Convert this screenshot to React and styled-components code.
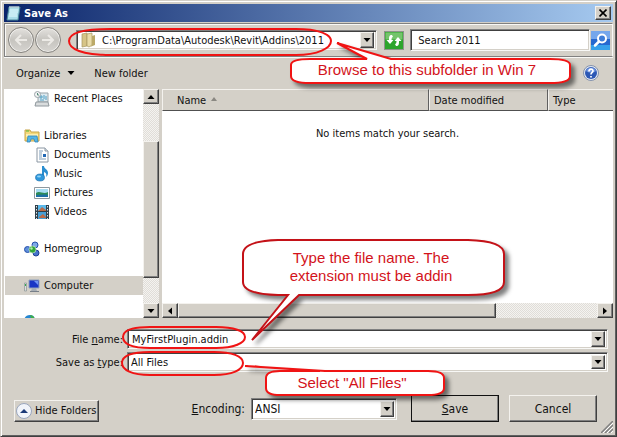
import React from 'react';
import styled, { createGlobalStyle, css } from 'styled-components';

const GlobalStyle = createGlobalStyle`
    * {
        box-sizing: border-box;
    }
    body {
        margin: 0;
        background: #d4d0c8;
        color: #111;
        font-family: "DejaVu Sans Condensed", "DejaVu Sans", Tahoma, sans-serif;
        font-size: 11px;
    }
    button, input, select {
        margin: 0;
        font: inherit;
        color: inherit;
    }
`

const raised = css`
    border: 1px solid;
    border-color: #f4f2ee #404040 #404040 #f4f2ee;
    box-shadow: inset -1px -1px 0 #808080;
    background: #d4d0c8;
`
const sunken = css`
    border: 1px solid;
    border-color: #808080 #f8f8f6 #f8f8f6 #808080;
    box-shadow: inset 1px 1px 0 #404040, inset -1px -1px 0 #d4d0c8;
    background: white;
`

const Dialog = styled.main`
    position: relative;
    display: flex;
    flex-direction: column;
    height: 100vh;
    min-height: 400px;
    padding: 3px 3px 2px 3px;
    overflow: hidden;
    border: 1px solid;
    border-color: #d4d0c8 #404040 #404040 #d4d0c8;
    box-shadow: inset 1px 1px 0 #fff, inset -1px -1px 0 #606060;
    background: #d4d0c8;
`
const TitleBar = styled.header`
    display: flex;
    align-items: center;
    gap: 3px;
    height: 18px;
    padding: 0 2px;
    background: linear-gradient(90deg, #0a246a, #a6caf0);
    h1 {
        flex: 1;
        margin: 0;
        color: white;
        font-size: 11px;
        font-weight: bold;
    }
`
const CloseButton = styled.button`
    ${raised}
    display: flex;
    align-items: center;
    justify-content: center;
    width: 16px;
    height: 14px;
    padding: 0;
`
const NavBar = styled.nav`
    display: flex;
    align-items: center;
    height: 34px;
    margin-top: 1px;
    padding: 0 2px 0 3px;
    border: 1px solid;
    border-color: #808080 #f8f8f6 #808080 #808080;
    box-shadow: inset 1px 1px 0 #f8f8f6, 0 1px 0 #f8f8f6;
`
const TravelButtons = styled.div`
    display: flex;
    align-items: center;
    gap: 1px;
    width: 68px;
`
const RoundButton = styled.button`
    display: flex;
    align-items: center;
    justify-content: center;
    width: 26px;
    height: 26px;
    padding: 0;
    border: 1px solid #85837f;
    border-radius: 50%;
    background: linear-gradient(#e4e2de, #c6c4bf 50%, #d6d4d0);
    box-shadow: inset 0 0 0 1px #f0efec;
`
const Field = styled.div`
    ${sunken}
    display: flex;
    align-items: center;
    flex: ${props => props.$grow || 1} 1 0;
    min-width: 0;
    height: ${props => props.$tall ? 22 : 20}px;
    padding: 2px;
    > svg {
        flex: none;
        margin-left: 2px;
    }
    input, select {
        flex: 1;
        min-width: 0;
        height: 100%;
        padding: 0 0 0 ${props => props.$indent || 2}px;
        border: 0;
        outline: 0;
        background: transparent;
        appearance: none;
    }
    input::placeholder {
        color: #111;
        opacity: 1;
    }
`
const ArrowButton = styled.button`
    ${raised}
    display: flex;
    align-items: center;
    justify-content: center;
    flex: none;
    width: ${props => props.$wide ? 16 : 14}px;
    height: ${props => props.$wide ? 15 : 16}px;
    padding: 0;
`
const SelectBox = styled(Field)`
    select {
        padding: 0 16px 0 1px;
    }
    span {
        ${raised}
        display: flex;
        align-items: center;
        justify-content: center;
        width: 14px;
        height: 100%;
        margin-left: -14px;
        pointer-events: none;
    }
`
const IconButton = styled.button`
    display: flex;
    flex: none;
    padding: 0;
    border: 0;
    background: none;
`
const Refresh = styled(IconButton)`
    margin: 0 6px 0 7px;
`
const Search = styled(IconButton)`
    margin-left: 1px;
`
const ToolBar = styled.div`
    display: flex;
    align-items: center;
    height: 32px;
    padding: 0 14px 0 12px;
    gap: 19px;
`
const TextButton = styled.button`
    display: flex;
    align-items: center;
    gap: 7px;
    padding: 0;
    border: 0;
    background: none;
`
const Help = styled(IconButton)`
    margin-left: auto;
`
const Browser = styled.div`
    display: flex;
    flex: 1;
    min-height: 0;
`
const Tree = styled.ul`
    flex: 0 0 139px;
    margin: 0;
    padding: 0;
    overflow: hidden;
    list-style: none;
    background: white;
`
const TreeRow = styled.li`
    margin-top: ${props => props.$apart ? 18 : 0}px;
    margin-left: 1px;
    a {
        display: flex;
        align-items: center;
        gap: 4px;
        height: 19px;
        padding-left: ${props => props.$child ? 29 : 19}px;
        color: inherit;
        text-decoration: none;
        background: ${props => props.$selected ? '#d4d0c8' : 'none'};
    }
`
const ScrollBar = styled.div`
    display: flex;
    flex: none;
    flex-direction: ${props => props.$vertical ? 'column' : 'row'};
    ${props => props.$vertical ? 'width: 16px;' : 'height: 15px;'}
    background: repeating-conic-gradient(#e0ddd8 0 25%, #f4f3f0 0 50%) 0 0 / 2px 2px;
`
const Track = styled.div`
    flex: ${props => props.$size} 1 0;
`
const Thumb = styled(Track)`
    ${raised}
`
const FileList = styled.section`
    display: flex;
    flex: 1;
    flex-direction: column;
    min-width: 0;
    margin-left: 3px;
    background: white;
`
const Files = styled.table`
    width: 100%;
    border-collapse: separate;
    border-spacing: 0;
    table-layout: fixed;
    th {
        height: 22px;
        padding: 0 0 0 4px;
        border: 1px solid;
        border-color: #f4f2ee #606060 #505050 #f4f2ee;
        background: #d4d0c8;
        text-align: left;
        font-weight: normal;
    }
    th:first-child {
        padding-left: 14px;
    }
    th:nth-child(2) {
        width: 119px;
    }
    th:last-child {
        width: 65px;
        border-right: 0;
    }
    th svg {
        margin: 0 0 3px 5px;
    }
    td {
        height: 44px;
        padding: 0;
        text-align: center;
    }
`
const Fill = styled.div`
    flex: 1;
`
const Form = styled.form`
    padding: 11px 5px 12px 10px;
`
const FormRow = styled.div`
    display: flex;
    align-items: center;
    gap: 4px;
    margin-bottom: 3px;
    label {
        width: 109px;
        text-align: right;
    }
`
const Actions = styled.div`
    display: flex;
    align-items: center;
    margin-top: 23px;
    padding-right: 11px;
`
const HideFolders = styled.button`
    ${raised}
    display: flex;
    align-items: center;
    gap: 3px;
    height: 22px;
    margin-top: 4px;
    padding: 0 2px 0 1px;
    white-space: nowrap;
`
const Encoding = styled.div`
    display: flex;
    align-items: center;
    justify-content: flex-end;
    gap: 6px;
    flex: 1;
    font-size: 12px;
    ${SelectBox} {
        flex: 0 0 146px;
    }
`
const PushButton = styled.button`
    ${raised}
    width: 88px;
    height: 27px;
    margin-left: ${props => props.$main ? 14 : 10}px;
    font-size: 12px;
    outline: ${props => props.$main ? '1px solid #111' : 'none'};
    outline-offset: -1px;
`
const Grip = styled.svg`
    position: absolute;
    right: 3px;
    bottom: 3px;
`
const Marks = styled.svg`
    position: absolute;
    top: 0;
    left: 0;
    pointer-events: none;
    fill: none;
    stroke-width: 2;
    .balloon {
        fill: white;
        filter: drop-shadow(4px 4px 2px rgba(0, 0, 0, 0.5));
    }
`
const Note = styled.p`
    position: absolute;
    top: ${props => props.$top}px;
    left: ${props => props.$left}px;
    width: ${props => props.$width}px;
    margin: 0;
    color: #d3131b;
    font-family: "Liberation Sans", Arial, sans-serif;
    font-size: 15px;
    line-height: 18px;
    text-align: center;
    pointer-events: none;
`

const Arrow = ({ turn = 0 }) => (
    <svg width="8" height="8" viewBox="0 0 8 8">
        <path d="M0.5 2h7L4 6z" fill="#000" transform={`rotate(${turn} 4 4)`} />
    </svg>
)

const NotepadIcon = () => (
    <svg width="15" height="16" viewBox="0 0 15 16">
        <path d="M3 2h11l-2 13H1z" fill="#a9dce8" stroke="#4b8698" />
        <path d="M4 5h8M4 7h8M3 9h8M3 11h8" stroke="#e7fbff" />
        <path d="M4 1v2M6 1v2M8 1v2M10 1v2M12 1v2" stroke="#e9edf0" />
    </svg>
)

const FolderIcon = () => (
    <svg width="15" height="16" viewBox="0 0 15 16">
        <path d="M1 2l5-1v13l-5 1z" fill="#d6c486" stroke="#a6965e" strokeWidth=".7" />
        <path d="M6 2l5-1v12l-3 2-2-1z" fill="#eadca8" stroke="#a6965e" strokeWidth=".7" />
        <path d="M11 4l3-1v10l-5 2 2-2z" fill="#bba967" />
    </svg>
)

const RecentIcon = () => (
    <svg width="16" height="16" viewBox="0 0 16 16">
        <path d="M4 2h10v9H4z" fill="#dce9ef" stroke="#9aa3a8" />
        <path d="M6 5h2v2H6zM10 4v4M12 5v4M6 9h4" stroke="#4f9fc4" fill="none" />
        <path d="M2 11h12l1 4H1z" fill="#d9dcdd" stroke="#8f989d" />
        <circle cx="3.5" cy="3.5" r="3" fill="#f2f4f5" stroke="#9da5aa" />
        <path d="M3.500 2v2h1.500" fill="none" stroke="#587" />
    </svg>
)

const LibrariesIcon = () => (
    <svg width="16" height="16" viewBox="0 0 16 16">
        <path d="M1 2h5l1 2h8v9H1z" fill="#f4d879" stroke="#c9a548" />
        <path d="M2 3h3" stroke="#53b53b" />
        <path d="M2 6h12v3H2z" fill="#fbeeb0" />
        <path d="M3 14l1-6h9l1 6h-3l-1-3H7l-1 3z" fill="#55b5e6" stroke="#2f86bd" strokeWidth=".8" />
    </svg>
)

const DocumentsIcon = () => (
    <svg width="16" height="16" viewBox="0 0 16 16">
        <path d="M3 1h8l3 3v11H3z" fill="#fff" stroke="#8b97a3" />
        <path d="M11 1v3h3" fill="#dbe2e9" stroke="#8b97a3" />
        <path d="M5 4h4M5 6h3M5 8h3M5 10h3M5 12h7" stroke="#7f9db9" />
        <path d="M9 7h3v3H9z" fill="#2168b5" />
    </svg>
)

const MusicIcon = () => (
    <svg width="16" height="16" viewBox="0 0 16 16">
        <path d="M8 0h2c0 3 4 3 4 7 0 2-1 3-2 4 1-3 0-4-2-5v6H8z" fill="#2b8ed0" />
        <ellipse cx="6" cy="11.500" rx="4.500" ry="3.500" fill="#2e97db" stroke="#176aa8" strokeWidth=".6" />
        <ellipse cx="5" cy="10.500" rx="2" ry="1" fill="#8ed3f7" />
    </svg>
)

const PicturesIcon = () => (
    <svg width="16" height="16" viewBox="0 0 16 16">
        <path d="M.5 2.500h15v11H.5z" fill="#fff" stroke="#8e989e" />
        <path d="M2 4h12v4H2z" fill="#a7dcf2" />
        <path d="M2 8c4-3 7 2 12-1v5H2z" fill="#2e8b57" />
        <path d="M2 10c4 0 8-1 12 0v2H2z" fill="#1d6fa5" />
    </svg>
)

const VideosIcon = () => (
    <svg width="16" height="16" viewBox="0 0 16 16">
        <path d="M1 1h14v14H1z" fill="#30404a" />
        <path d="M4 1h8v6H4z" fill="#5cb9ea" />
        <path d="M4 8h8v7H4z" fill="#469fd6" />
        <path d="M5 6l3-3 4 3v1H4zM5 13l4-3 3 3v1H5z" fill="#b96c4a" />
        <path d="M2.500 2v13M13.500 2v13" stroke="#dce5ea" strokeDasharray="1.500 1.500" />
    </svg>
)

const HomegroupIcon = () => (
    <svg width="16" height="16" viewBox="0 0 16 16">
        <circle cx="11" cy="4" r="3" fill="#7ea9e8" stroke="#2450aa" />
        <circle cx="3.500" cy="8.500" r="3" fill="#5f8edb" stroke="#2450aa" />
        <circle cx="12" cy="12" r="3" fill="#4773cc" stroke="#1d3f92" />
        <circle cx="8.500" cy="8.500" r="3.500" fill="#31a63a" stroke="#dff3df" strokeWidth=".6" />
        <circle cx="7.500" cy="7.500" r="1.200" fill="#b4efad" />
    </svg>
)

const ComputerIcon = () => (
    <svg width="16" height="16" viewBox="0 0 16 16">
        <path d="M.5 5h2v8h-2z" fill="#d9dedf" stroke="#8c9595" strokeWidth=".7" />
        <path d="M1 6h1v2H1z" fill="#35a853" />
        <path d="M5 2h10v8H5z" fill="#1a35c5" stroke="#8fa0bd" />
        <path d="M10 3h4v4z" fill="#7094f4" />
        <path d="M8 10h4l1 3H7z" fill="#a6adb5" />
        <path d="M6 13.500h9" stroke="#777f88" />
    </svg>
)

const NetworkIcon = () => (
    <svg width="16" height="16" viewBox="0 0 16 16">
        <path d="M0 6c0-3 2-6 6-6s5 3 5 6-2 6-5 6-6-3-6-6z" fill="#2486d0" />
        <path d="M6 0c3 0 4 2 5 4L7 3z" fill="#3fae48" />
        <path d="M5 7h10v7H5z" fill="#1a35c5" stroke="#8fa0bd" />
    </svg>
)

const RefreshIcon = () => (
    <svg width="20" height="19" viewBox="0 0 20 19">
        <rect x=".5" y=".5" width="19" height="18" fill="#2da52c" stroke="#8f948c" />
        <path d="M1.500 1.500h17v7h-17z" fill="#74c46b" />
        <path d="M8 4C5 4 5 6 5 9H2.500L6 13l3.500-4H7.500C7.500 7 8 6 9 6zM12 15c3 0 3-2 3-5h2.500L14 6l-3.500 4h2c0 2-.5 3-1.500 3z" fill="#fff" />
    </svg>
)

const SearchIcon = () => (
    <svg width="19" height="19" viewBox="0 0 19 19">
        <rect width="19" height="19" fill="#2668cf" />
        <path d="M0 0h19v8H0z" fill="#75a7ec" />
        <path d="M0 14h19v5H0z" fill="#36a0ea" />
        <circle cx="11" cy="7.500" r="4" fill="#3f7ed8" stroke="#fff" strokeWidth="2" />
        <path d="M8 10.500l-4 4" stroke="#fff" strokeWidth="2.500" strokeLinecap="round" />
    </svg>
)

const HelpIcon = () => (
    <svg width="16" height="16" viewBox="0 0 16 16">
        <circle cx="8" cy="8" r="7.500" fill="#e4e9f2" stroke="#8492ac" />
        <circle cx="8" cy="8" r="6" fill="#2c58b5" />
        <path d="M3 6a5.500 5.500 0 0 1 10 0c-3 2-7 2-10 0z" fill="#6f95df" />
        <path d="M6 6.500c0-3 4-3 4-.5C10 7.500 8 7.500 8 9.500M8 11v1.500" fill="none" stroke="#fff" strokeWidth="1.700" />
    </svg>
)

const places = [
    { name: 'Recent Places', icon: <RecentIcon />, child: true },
    { name: 'Libraries', icon: <LibrariesIcon />, apart: true },
    { name: 'Documents', icon: <DocumentsIcon />, child: true },
    { name: 'Music', icon: <MusicIcon />, child: true },
    { name: 'Pictures', icon: <PicturesIcon />, child: true },
    { name: 'Videos', icon: <VideosIcon />, child: true },
    { name: 'Homegroup', icon: <HomegroupIcon />, apart: true },
    { name: 'Computer', icon: <ComputerIcon />, apart: true, selected: true },
    { icon: <NetworkIcon />, apart: true },
]

const App = () => (
    <Dialog>
        <GlobalStyle />
        <TitleBar>
            <NotepadIcon />
            <h1>Save As</h1>
            <CloseButton aria-label="Close">
                <svg width="8" height="8" viewBox="0 0 8 8">
                    <path d="M.5.5l7 7M7.500.5l-7 7" stroke="#000" strokeWidth="1.600" />
                </svg>
            </CloseButton>
        </TitleBar>
        <NavBar>
            <TravelButtons>
                <RoundButton aria-label="Back">
                    <svg width="14" height="14" viewBox="0 0 14 14">
                        <path d="M7 2L2 7l5 5M2 7h11" fill="none" stroke="#eceae6" strokeWidth="2" />
                    </svg>
                </RoundButton>
                <RoundButton aria-label="Forward">
                    <svg width="14" height="14" viewBox="0 0 14 14">
                        <path d="M7 2l5 5-5 5M12 7H1" fill="none" stroke="#eceae6" strokeWidth="2" />
                    </svg>
                </RoundButton>
            </TravelButtons>
            <Field $grow={17} $indent={6}>
                <FolderIcon />
                <input aria-label="Address" defaultValue="C:\ProgramData\Autodesk\Revit\Addins\2011" />
                <ArrowButton aria-label="Previous locations"><Arrow /></ArrowButton>
            </Field>
            <Refresh aria-label="Refresh"><RefreshIcon /></Refresh>
            <Field $grow={10} $indent={5} $tall>
                <input aria-label="Search" placeholder="Search 2011" />
            </Field>
            <Search aria-label="Start search"><SearchIcon /></Search>
        </NavBar>
        <ToolBar>
            <TextButton>Organize <Arrow /></TextButton>
            <TextButton>New folder</TextButton>
            <Help aria-label="Help"><HelpIcon /></Help>
        </ToolBar>
        <Browser>
            <Tree>
                {places.map((place, i) => (
                    <TreeRow key={i} $child={place.child} $apart={place.apart} $selected={place.selected}>
                        <a href="#">{place.icon}{place.name}</a>
                    </TreeRow>
                ))}
            </Tree>
            <ScrollBar $vertical>
                <ArrowButton $wide aria-label="Scroll up"><Arrow turn={180} /></ArrowButton>
                <Track $size={37} />
                <Thumb $size={136} />
                <Track $size={25} />
                <ArrowButton $wide aria-label="Scroll down"><Arrow /></ArrowButton>
            </ScrollBar>
            <FileList>
                <Files>
                    <thead>
                        <tr>
                            <th>
                                Name
                                <svg width="6" height="4" viewBox="0 0 6 4"><path d="M0 4l3-4 3 4z" fill="#8a8882" /></svg>
                            </th>
                            <th>Date modified</th>
                            <th>Type</th>
                        </tr>
                    </thead>
                    <tbody>
                        <tr><td colSpan="3">No items match your search.</td></tr>
                    </tbody>
                </Files>
                <Fill />
                <ScrollBar>
                    <ArrowButton $wide aria-label="Scroll left"><Arrow turn={90} /></ArrowButton>
                    <Thumb $size={318} />
                    <Track $size={101} />
                    <ArrowButton $wide aria-label="Scroll right"><Arrow turn={-90} /></ArrowButton>
                </ScrollBar>
            </FileList>
        </Browser>
        <Form onSubmit={e => e.preventDefault()}>
            <FormRow>
                <label htmlFor="name">File <u>n</u>ame:</label>
                <Field>
                    <input id="name" defaultValue="MyFirstPlugin.addin" />
                    <ArrowButton type="button" aria-label="Recent names"><Arrow /></ArrowButton>
                </Field>
            </FormRow>
            <FormRow>
                <label htmlFor="type">Save as <u>t</u>ype:</label>
                <SelectBox>
                    <select id="type"><option>All Files</option></select>
                    <span><Arrow /></span>
                </SelectBox>
            </FormRow>
            <Actions>
                <HideFolders type="button">
                    <svg width="16" height="16" viewBox="0 0 16 16">
                        <circle cx="8" cy="8" r="7.500" fill="#f1f4fa" stroke="#9aa6bd" />
                        <path d="M4 10l4-4 4 4z" fill="#1c3a78" />
                    </svg>
                    Hide Folders
                </HideFolders>
                <Encoding>
                    <label htmlFor="encoding"><u>E</u>ncoding:</label>
                    <SelectBox $tall>
                        <select id="encoding"><option>ANSI</option></select>
                        <span><Arrow /></span>
                    </SelectBox>
                </Encoding>
                <PushButton $main><u>S</u>ave</PushButton>
                <PushButton type="button">Cancel</PushButton>
            </Actions>
        </Form>
        <Grip width="12" height="12" viewBox="0 0 12 12">
            <path d="M0 12L12 0M4 12l8-8M8 12l4-4" stroke="#808080" strokeWidth="1.500" />
            <path d="M2 12L12 2M6 12l6-6M10 12l2-2" stroke="#fff" />
        </Grip>
        <Marks width="617" height="437" viewBox="1 1 617 437">
            <g stroke="#f01414">
                <path d="M110 29H296C318 29 331 34 331 41S318 55 296 55H110C82 55 69 49 69 41S82 29 110 29z" />
                <path d="M150 327H216C234 327 245 331 245 337S234 348 216 348H150C132 348 123 344 123 337S132 327 150 327z" />
                <path d="M150 352H214C232 352 243 356 243 363S232 375 214 375H150C132 375 122 370 122 363S132 352 150 352z" />
                <path className="balloon" d="M310 59H367L337 43 391 59H550Q570 59 570 65V76Q570 83 550 83H310Q291 83 291 76V65Q291 59 310 59z" />
                <path className="balloon" d="M280 371H320L245 366 325 371H428Q444 371 444 378V388Q444 395 428 395H280Q266 395 266 388V378Q266 371 280 371z" />
            </g>
            <path className="balloon" stroke="#c41218" d="M278 240H468Q504 241 504 254V282Q504 295 468 295H299L252 340 288 295H278Q243 294 243 282V254Q243 241 278 240z" />
        </Marks>
        <Note $top={60} $left={288} $width={276}>Browse to this subfolder in Win 7</Note>
        <Note $top={248} $left={251} $width={238}>Type the file name. The<br />extension must be addin</Note>
        <Note $top={373} $left={262} $width={178}>Select "All Files"</Note>
    </Dialog>
)

export default App;
